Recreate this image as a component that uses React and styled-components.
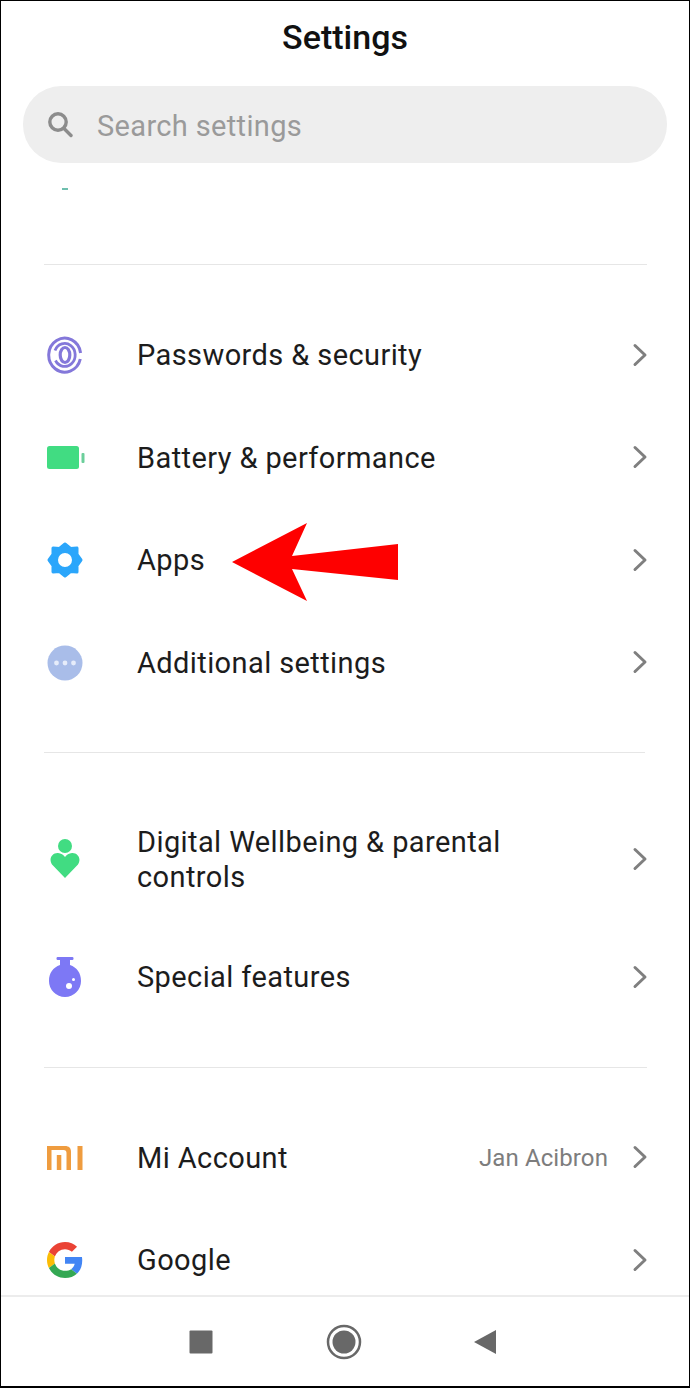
import React from "react";
import styled, { createGlobalStyle } from "styled-components";

const Global = createGlobalStyle`
  html, body { margin: 0; padding: 0; background: #fff; }
  * { box-sizing: border-box; }
`;

const Frame = styled.div`
  position: relative;
  width: 690px;
  height: 1388px;
  background: #fff;
  border-style: solid;
  border-color: #000;
  border-width: 1px 1px 2px 1px;
  display: flex;
  flex-direction: column;
  overflow: hidden;
  font-family: Roboto, "Liberation Sans", sans-serif;
`;

const Title = styled.h1`
  margin: 0;
  height: 72px;
  display: flex;
  align-items: center;
  justify-content: center;
  font-size: 34px;
  font-weight: 500;
  color: #111;
`;

const SearchBar = styled.div`
  margin: 13px 22px 0 22px;
  height: 77px;
  flex: none;
  border-radius: 38px;
  background: #eeeeee;
  display: flex;
  align-items: center;
  padding: 3px 0 0 24px;
  gap: 24px;
  font-size: 29px;
  letter-spacing: 0.35px;
  color: #9a9a9a;
`;

const SearchGlyph = styled.span`
  display: flex;
  margin-top: -4px;
`;

const Scroll = styled.div`
  flex: 1;
  min-height: 0;
  overflow: hidden;
`;

const Peek = styled.div`
  width: 6px;
  height: 2px;
  margin: 25px 0 0 61px;
  background: #6fbfae;
`;

const Divider = styled.div`
  height: 1px;
  margin: ${(p) => p.$top}px ${(p) => p.$right}px 0 43px;
  background: #e6e6e6;
`;

const Group = styled.div`
  margin-top: 39px;
`;

const Row = styled.div`
  height: ${(p) => (p.$tall ? 134 : 102.5)}px;
  display: flex;
  align-items: center;
  padding: 0 41px 0 45px;
`;

const IconSlot = styled.div`
  width: 38px;
  height: 38px;
  flex: none;
  display: flex;
  align-items: center;
  justify-content: center;
`;

const Label = styled.div`
  flex: 1;
  margin-left: 53px;
  padding-top: ${(p) => (p.$tall ? 2 : 1)}px;
  font-size: 29px;
  line-height: 35px;
  letter-spacing: 0.4px;
  color: #1c1c1c;
`;

const Value = styled.div`
  font-size: 24px;
  letter-spacing: 0.1px;
  color: #7d7d7d;
  margin-right: 24px;
`;

const ChevronWrap = styled.span`
  display: flex;
  margin-top: -1px;
`;

const NavBar = styled.div`
  height: 91px;
  flex: none;
  border-top: 2px solid #ececec;
  display: flex;
  align-items: center;
  padding-left: 188px;
`;

const NavSlot = styled.div`
  display: flex;
  width: ${(p) => p.$w}px;
`;

const ArrowOverlay = styled.svg`
  position: absolute;
  left: 230px;
  top: 520px;
`;

const Chevron = () => (
  <ChevronWrap>
    <svg width="16" height="24" viewBox="0 0 16 24" fill="none">
      <path d="M3 2.5 L13 12 L3 21.5" stroke="#7f7f7f" strokeWidth="3" strokeLinecap="round" strokeLinejoin="round" />
    </svg>
  </ChevronWrap>
);

const SearchIcon = () => (
  <svg width="26" height="28" viewBox="0 0 26 28" fill="none" stroke="#8c8c8c" strokeWidth="3.4">
    <circle cx="11" cy="12" r="8.2" />
    <path d="M17 18.5 L24 25.5" strokeLinecap="round" />
  </svg>
);

const Fingerprint = () => (
  <svg width="36" height="38" viewBox="0 0 36 38" fill="none" stroke="#8478da" strokeLinecap="butt">
    <path strokeWidth="3" d="M33.600 17 A16 17 0 1 0 33.300 23" />
    <path strokeWidth="2.800" d="M8.500 24.500 A10.500 11.500 0 1 0 8 14.500" />
    <ellipse cx="18" cy="19" rx="4.800" ry="7.500" strokeWidth="3.200" />
  </svg>
);

const Battery = () => (
  <svg width="38" height="24" viewBox="0 0 38 24">
    <rect x="0" y="0" width="32" height="23" rx="2.5" fill="#41dc82" />
    <rect x="34.5" y="7" width="3" height="10" rx="1" fill="#6ccf9b" />
  </svg>
);

const BatterySlot = styled.span`
  display: flex;
  margin-left: 2px;
`;

const Gear = () => (
  <svg width="38" height="38" viewBox="0 0 38 38">
    <path
      fill="#2ba6fb"
      fillRule="evenodd"
      stroke="#2ba6fb"
      strokeWidth="3"
      strokeLinejoin="round"
      d="M19 3 L24.500 7.500 L31 7 L31 13.500 L35 19 L31 24.500 L31 31 L24.500 30.500 L19 35 L13.500 30.500 L7 31 L7 24.500 L3 19 L7 13.500 L7 7 L13.500 7.500 Z M19 10.500 A8.500 8.500 0 1 0 19 27.500 A8.500 8.500 0 1 0 19 10.500 Z"
    />
  </svg>
);

const More = () => (
  <svg width="36" height="36" viewBox="0 0 36 36">
    <circle cx="18" cy="18" r="17.500" fill="#a9bde9" />
    <circle cx="9.500" cy="18" r="2.400" fill="#e6ecfa" />
    <circle cx="18" cy="18" r="2.400" fill="#e6ecfa" />
    <circle cx="26.500" cy="18" r="2.400" fill="#e6ecfa" />
  </svg>
);

const Wellbeing = () => (
  <svg width="30" height="40" viewBox="0 0 30 40">
    <circle cx="15" cy="7" r="7" fill="#41dc82" />
    <path
      fill="#41dc82"
      d="M15 39 L2 25.500 C-2 19 3 13.500 8 14 C11 14.300 13.500 16 15 18 C16.500 16 19 14.300 22 14 C27 13.500 32 19 28 25.500 Z"
    />
  </svg>
);

const Flask = () => (
  <svg width="34" height="41" viewBox="0 0 34 41">
    <rect x="8.500" y="0" width="17" height="3" rx="1.200" fill="#7d78f5" />
    <path fill="#7d78f5" d="M12 2 H22 V8 C29 10.500 33 16 33 24 A16 16 0 0 1 1 24 C1 16 5 10.500 12 8 Z" />
    <circle cx="21" cy="29" r="3" fill="#fff" />
    <circle cx="25.500" cy="22.500" r="1.500" fill="#fff" />
  </svg>
);

const MiLogo = () => (
  <svg width="36" height="24" viewBox="0 0 36 24" fill="#ef9c3f">
    <path d="M0 0 H18 C22 0 24 2 24 6 V24 H19.500 V7 C19.500 5 18.500 4 16.500 4 H4.500 V24 H0 Z" />
    <rect x="9.800" y="9" width="4.500" height="15" />
    <rect x="30.500" y="0" width="5" height="24" />
  </svg>
);

const GoogleLogo = () => (
  <svg width="36" height="36" viewBox="0 0 48 48">
    <path fill="#EA4335" d="M24 9.500c3.540 0 6.710 1.220 9.210 3.600l6.850-6.850C35.900 2.380 30.470 0 24 0 14.620 0 6.510 5.380 2.560 13.220l7.980 6.190C12.430 13.720 17.740 9.500 24 9.500z" />
    <path fill="#4285F4" d="M46.980 24.550c0-1.570-.15-3.090-.38-4.550H24v9.020h12.940c-.58 2.960-2.260 5.480-4.780 7.180l7.730 6c4.510-4.180 7.090-10.360 7.090-17.650z" />
    <path fill="#FBBC05" d="M10.530 28.590c-.48-1.450-.76-2.990-.76-4.590s.27-3.140.76-4.590l-7.980-6.190C.92 16.460 0 20.120 0 24c0 3.880.92 7.540 2.560 10.780l7.970-6.190z" />
    <path fill="#34A853" d="M24 48c6.480 0 11.930-2.130 15.890-5.810l-7.730-6c-2.150 1.450-4.920 2.300-8.160 2.300-6.260 0-11.570-4.220-13.470-9.910l-7.980 6.190C6.510 42.620 14.620 48 24 48z" />
  </svg>
);

const RedArrow = () => (
  <ArrowOverlay width="170" height="84" viewBox="0 0 170 84">
    <path fill="#fe0000" d="M1 41 L76 2 L61 35 L167 23 L167 59 L61 48 L76 80 Z" />
  </ArrowOverlay>
);

const SettingRow = ({ icon, label, value, tall }) => (
  <Row $tall={tall}>
    <IconSlot>{icon}</IconSlot>
    <Label $tall={tall}>{label}</Label>
    {value && <Value>{value}</Value>}
    <Chevron />
  </Row>
);

export default function App() {
  return (
    <>
      <Global />
      <Frame>
        <Title>Settings</Title>
        <SearchBar>
          <SearchGlyph><SearchIcon /></SearchGlyph>
          Search settings
        </SearchBar>
        <Scroll>
          <Peek />
          <Divider $top={74} $right={42} />
          <Group>
            <SettingRow icon={<Fingerprint />} label="Passwords & security" />
            <SettingRow icon={<BatterySlot><Battery /></BatterySlot>} label="Battery & performance" />
            <SettingRow icon={<Gear />} label="Apps" />
            <SettingRow icon={<More />} label="Additional settings" />
          </Group>
          <Divider $top={38} $right={44} />
          <Group>
            <SettingRow tall icon={<Wellbeing />} label={<>Digital Wellbeing &amp; parental<br />controls</>} />
            <SettingRow icon={<Flask />} label="Special features" />
          </Group>
          <Divider $top={38} $right={42} />
          <Group>
            <SettingRow icon={<MiLogo />} label="Mi Account" value="Jan Acibron" />
            <SettingRow icon={<GoogleLogo />} label="Google" />
          </Group>
        </Scroll>
        <NavBar>
          <NavSlot $w={137}>
            <svg width="24" height="24"><rect width="23" height="23" x="0.500" y="0.500" rx="1" fill="#686868" /></svg>
          </NavSlot>
          <NavSlot $w={147}>
            <svg width="36" height="36" viewBox="0 0 36 36">
              <circle cx="18" cy="18" r="16" fill="none" stroke="#686868" strokeWidth="2.500" />
              <circle cx="18" cy="18" r="11.500" fill="#686868" />
            </svg>
          </NavSlot>
          <NavSlot $w={24}>
            <svg width="24" height="26" viewBox="0 0 24 26"><path d="M1 13 L23 1 V25 Z" fill="#686868" /></svg>
          </NavSlot>
        </NavBar>
        <RedArrow />
      </Frame>
    </>
  );
}
